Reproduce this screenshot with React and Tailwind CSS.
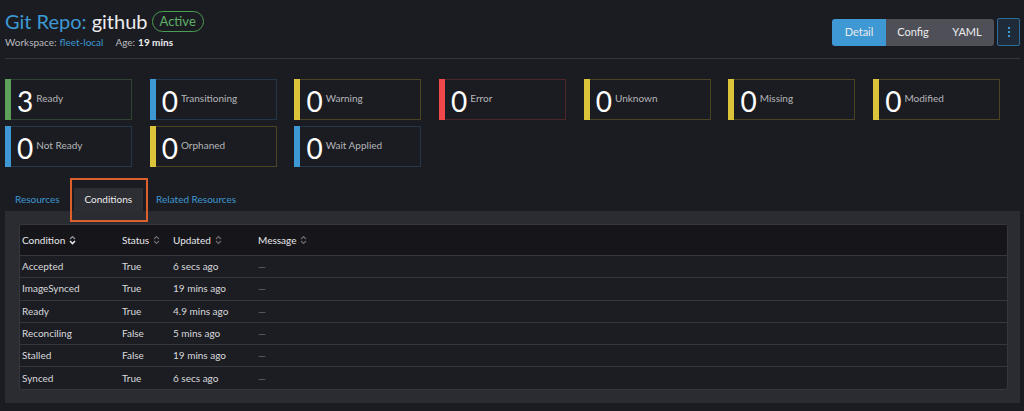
import React from "react";

const cards = [
  { n: 3, label: "Ready", stripe: "bg-[#5d9e58]", border: "border-[#2f4331]" },
  { n: 0, label: "Transitioning", stripe: "bg-[#3d98d3]", border: "border-[#23364a]" },
  { n: 0, label: "Warning", stripe: "bg-[#dbc33a]", border: "border-[#4a4324]" },
  { n: 0, label: "Error", stripe: "bg-[#f0484a]", border: "border-[#4e2628]" },
  { n: 0, label: "Unknown", stripe: "bg-[#dbc33a]", border: "border-[#4a4324]" },
  { n: 0, label: "Missing", stripe: "bg-[#dbc33a]", border: "border-[#4a4324]" },
  { n: 0, label: "Modified", stripe: "bg-[#dbc33a]", border: "border-[#4a4324]" },
  { n: 0, label: "Not Ready", stripe: "bg-[#3d98d3]", border: "border-[#23364a]" },
  { n: 0, label: "Orphaned", stripe: "bg-[#dbc33a]", border: "border-[#4a4324]" },
  { n: 0, label: "Wait Applied", stripe: "bg-[#3d98d3]", border: "border-[#23364a]" },
];

const rows = [
  ["Accepted", "True", "6 secs ago"],
  ["ImageSynced", "True", "19 mins ago"],
  ["Ready", "True", "4.9 mins ago"],
  ["Reconciling", "False", "5 mins ago"],
  ["Stalled", "False", "19 mins ago"],
  ["Synced", "True", "6 secs ago"],
];

function SortIcon({ active }) {
  return (
    <svg width="7" height="10" viewBox="0 0 7 10" className="ml-[4px]">
      <path d="M1 4 L3.5 1.5 L6 4" fill="none" stroke={active ? "#9a9ba0" : "#6b6c72"} strokeWidth="1.1" />
      <path d="M1 6 L3.5 8.5 L6 6" fill="none" stroke={active ? "#e6e7ea" : "#6b6c72"} strokeWidth={active ? "1.6" : "1.1"} />
    </svg>
  );
}

export default function App() {
  return (
    <div
      className="w-[1024px] h-[411px] overflow-hidden bg-[#1b1c21] pl-[5px] pr-[4px] relative"
      style={{ fontFamily: "Lato, 'Open Sans', sans-serif" }}
    >
      {/* Header */}
      <div className="flex justify-between items-start border-b border-[#35363b] h-[59px] pt-[7px]">
        <div className="flex flex-col">
          <div className="flex items-center h-[28px]">
            <span className="text-[20px] text-[#3d98d3] leading-none">Git Repo:</span>
            <span className="text-[20px] text-[#ececee] leading-none ml-[5px]">github</span>
            <span className="ml-[4px] h-[21px] px-[7px] rounded-full border border-[#4c9e54] text-[#5fb068] text-[13px] flex items-center leading-none">
              Active
            </span>
          </div>
          <div className="flex items-center text-[10px] mt-[0px] leading-none h-[14px]">
            <span className="text-[#b9babe]">Workspace:</span>
            <span className="text-[#3d98d3] ml-[3px]">fleet-local</span>
            <span className="text-[#b9babe] ml-[12px]">Age:</span>
            <span className="text-[#ececee] ml-[3px] font-bold">19 mins</span>
          </div>
        </div>
        <div className="flex items-center mt-[11px]">
          <div className="flex rounded-[3px] overflow-hidden h-[27px] text-[11px] text-[#ececee]">
            <div className="w-[54px] bg-[#3d98d3] flex items-center justify-center">Detail</div>
            <div className="w-[54px] bg-[#4f5057] flex items-center justify-center">Config</div>
            <div className="w-[54px] bg-[#4f5057] flex items-center justify-center">YAML</div>
          </div>
          <div className="ml-[3px] w-[23px] h-[28px] rounded-[2px] border border-[#2e6c9c] bg-[#1f2b38] flex flex-col items-center justify-center gap-[2px]">
            <span className="w-[2px] h-[2px] bg-[#3d98d3]"></span>
            <span className="w-[2px] h-[2px] bg-[#3d98d3]"></span>
            <span className="w-[2px] h-[2px] bg-[#3d98d3]"></span>
          </div>
        </div>
      </div>

      {/* Cards */}
      <div className="grid grid-cols-[repeat(7,127px)] gap-x-[17.7px] gap-y-[6px] mt-[20px]">
        {cards.map((c, i) => (
          <div key={i} className={`h-[41px] flex border ${c.border}`}>
            <div className={`w-[6px] -my-px -ml-px ${c.stripe}`}></div>
            <div className="flex items-center pl-[6px]">
              <span className="text-[28px] text-white leading-none font-normal mt-[3px]">{c.n}</span>
              <span className="text-[10px] text-[#b5b6ba] ml-[3px] -mt-[3px]">{c.label}</span>
            </div>
          </div>
        ))}
      </div>

      {/* Tabs */}
      <div className="flex items-end h-[44px] text-[10px]">
        <div className="h-[23px] flex items-center pl-[10px] pr-[14px] text-[#3d98d3]">Resources</div>
        <div className="h-[23px] flex items-center px-[11px] bg-[#2d2e33] text-[#ececee]">Conditions</div>
        <div className="h-[23px] flex items-center px-[13px] text-[#3d98d3]">Related Resources</div>
      </div>

      {/* Orange highlight box */}
      <div className="absolute left-[70px] top-[178px] w-[78px] h-[44px] border-2 border-[#dd5f2c] pointer-events-none"></div>

      {/* Panel */}
      <div className="bg-[#2b2c31] pl-[14px] pr-[12px] pt-[13px] pb-[13px]">
        <div className="rounded-[3px] border border-[#36373c] bg-[#1c1d22] overflow-hidden text-[10px]">
          <div className="flex h-[30px] items-center bg-[#16161a] text-[#e6e7ea]">
            <div className="w-[102px] pl-[2px] flex items-center">Condition<SortIcon active /></div>
            <div className="w-[51px] flex items-center">Status<SortIcon /></div>
            <div className="w-[85px] flex items-center">Updated<SortIcon /></div>
            <div className="flex items-center">Message<SortIcon /></div>
          </div>
          {rows.map((r, i) => (
            <div key={i} className="flex h-[22.3px] items-center border-t border-[#36373c] text-[#d9dadd]">
              <div className="w-[102px] pl-[2px]">{r[0]}</div>
              <div className="w-[51px]">{r[1]}</div>
              <div className="w-[85px]">{r[2]}</div>
              <div className="text-[#6b6c72]">—</div>
            </div>
          ))}
        </div>
      </div>
    </div>
  );
}
